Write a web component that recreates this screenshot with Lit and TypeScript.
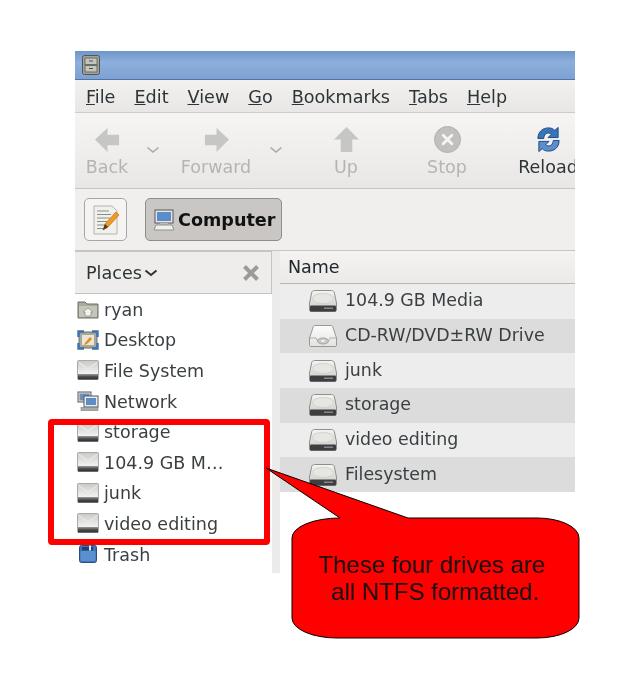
import { LitElement, html, css, svg } from "lit";
import { customElement } from "lit/decorators.js";

const disk = svg`<svg class="side-ic" viewBox="0 0 22 20"><defs><linearGradient id="d1" x1="0" y1="0" x2="0" y2="1"><stop offset="0" stop-color="#c9cac7"/><stop offset=".7" stop-color="#f2f2f0"/><stop offset="1" stop-color="#c8c9c6"/></linearGradient><linearGradient id="d2" x1="0" y1="0" x2="0" y2="1"><stop offset="0" stop-color="#9a9c9a"/><stop offset=".5" stop-color="#4a4c4c"/><stop offset="1" stop-color="#2c2e2e"/></linearGradient></defs><rect x=".5" y=".5" width="21" height="19" rx="1" fill="url(#d1)" stroke="#a9aba7"/><path d="M2 2.500l9 7 9-7" fill="none" stroke="#e8e8e6" stroke-width="1.500"/><rect x="1" y="14" width="20" height="5.500" fill="url(#d2)"/></svg>`;

const bigDisk = svg`<svg class="row-ic" viewBox="0 0 28 24"><defs><linearGradient id="b1" x1="0" y1="0" x2="0" y2="1"><stop offset="0" stop-color="#f4f4f2"/><stop offset="1" stop-color="#c9cac6"/></linearGradient></defs><path d="M5.500 1.500h17c1.500 0 2.300.8 2.800 2L27.500 14v7c0 1-.8 1.500-1.500 1.500H2c-.8 0-1.500-.5-1.500-1.500v-7L2.700 3.500C3.200 2.300 4 1.500 5.500 1.500z" fill="url(#b1)" stroke="#8d8f89"/><ellipse cx="14" cy="9.500" rx="10.500" ry="5" fill="#e6e6e3" stroke="#d2d3cf"/><rect x="1" y="16.500" width="26" height="6" rx="1" fill="#3c3e40"/><rect x="15" y="18.500" width="9" height="1.500" fill="#85878a"/></svg>`;

const cd = svg`<svg class="row-ic" viewBox="0 0 28 24"><defs><linearGradient id="c1" x1="0" y1="0" x2="0" y2="1"><stop offset="0" stop-color="#fdfdfc"/><stop offset="1" stop-color="#e2e2df"/></linearGradient></defs><path d="M6 1.500h16c1 0 1.500.6 1.800 1.500L27.500 14v7c0 1-.7 1.500-1.500 1.500H2c-.8 0-1.500-.5-1.500-1.500v-7L4.200 3C4.500 2.100 5 1.500 6 1.500z" fill="url(#c1)" stroke="#979992"/><path d="M1 14h6c1 3.500 3.500 5 7 5s6-1.500 7-5h6" fill="none" stroke="#b0b2ad"/><ellipse cx="14" cy="17" rx="5.500" ry="3" fill="#c9cac6" stroke="#a2a49f"/><ellipse cx="14" cy="17" rx="1.800" ry="1" fill="#f5f5f3"/></svg>`;

const home = svg`<svg class="side-ic" viewBox="0 0 22 20"><path d="M1 3h7l2 2h11v14H1z" fill="#a8ab9e" stroke="#6b6d62"/><rect x="2" y="7" width="18" height="11" fill="#c4c6bb"/><path d="M11 9l5 4h-2v4H8v-4H6z" fill="#f3f3ef" stroke="#888a7e" stroke-width=".7"/></svg>`;

const desktop = svg`<svg class="side-ic" viewBox="0 0 22 20"><rect x="2" y="2" width="18" height="16" rx="2" fill="#a6a99a" stroke="#6c6f63"/><rect x="5" y="5" width="12" height="10" fill="#e9e6d8"/><path d="M8 13l5-6 2 2-5 5-3 1z" fill="#e8891c"/><g fill="none" stroke="#3f72ae" stroke-width="2.400"><path d="M1.500 7V1.500H7"/><path d="M15 1.500h5.500V7"/><path d="M1.500 13v5.500H7"/><path d="M15 18.500h5.500V13"/></g></svg>`;

const network = svg`<svg class="side-ic" viewBox="0 0 22 20"><rect x="1" y="1" width="13" height="10" fill="#dfe2e6" stroke="#5b5e60"/><rect x="2.500" y="2.500" width="10" height="7" fill="#6e8fb8"/><rect x="7" y="5" width="14" height="11" fill="#eceded" stroke="#54575a"/><rect x="9" y="7" width="10" height="7" fill="#5d8ccb"/><rect x="4" y="16.500" width="17" height="3" fill="#a9aba8" stroke="#7b7d7a" stroke-width=".6"/></svg>`;

const trash = svg`<svg class="side-ic" viewBox="0 0 22 20"><rect x="2.500" y="1.500" width="17" height="17" rx="2" fill="#3d74b8" stroke="#274f86"/><rect x="3.500" y="7" width="15" height="10" rx="1" fill="#5a90d0"/><rect x="5" y="3" width="11" height="3.500" fill="#20416f"/><rect x="12" y="1.500" width="2" height="5" fill="#e8eef6"/></svg>`;

const leftArrow = svg`<svg class="tb-ic" viewBox="0 0 28 28"><path d="M1 14L14 2v7h12v11H14v7z" fill="#c6c6c4"/></svg>`;
const rightArrow = svg`<svg class="tb-ic" viewBox="0 0 28 28"><path d="M27 14L14 2v7H2v11h12v7z" fill="#c6c6c4"/></svg>`;
const upArrow = svg`<svg class="tb-ic" viewBox="0 0 28 28"><path d="M14 1L1 14h7v13h12V14h7z" fill="#c6c6c4"/></svg>`;
const stop = svg`<svg class="tb-ic" viewBox="0 0 28 28"><circle cx="14" cy="14" r="13.500" fill="#c3bfbd" stroke="#b2aeac"/><path d="M9.500 9.500l9 9m0-9l-9 9" stroke="#f6f5f4" stroke-width="3" stroke-linecap="round"/></svg>`;
const reload = svg`<svg class="tb-ic" viewBox="0 0 28 28"><path d="M3 13C3 6 8 1.500 15 2c2.500.2 4 1 5.500 2.500L24 1.500V12H13.500l3.500-3.500C15.500 7.500 14 7 12.500 7.500 10.500 8 9.500 10 9 13z" fill="#3a74b8" stroke="#1f4a87"/><path d="M25 15c0 7-5 11.500-12 11-2.500-.2-4-1-5.500-2.500L4 26.500V16h10.500L11 19.500c1.500 1 3 1.500 4.500 1 2-.5 3-2.500 3.500-5.500z" fill="#5a8fcb" stroke="#1f4a87"/></svg>`;
const chev = svg`<svg class="chev" viewBox="0 0 14 8"><path d="M1.500 1.500L7 6l5.500-4.500" fill="none" stroke="#a9a9a7" stroke-width="1.600"/></svg>`;

const cabinet = svg`<svg class="cab" viewBox="0 0 18 20"><rect x=".5" y=".5" width="17" height="19" rx="2" fill="#a3a39b" stroke="#55554f"/><rect x="3" y="3" width="12" height="6.500" fill="#c5c5bf" stroke="#6c6c66"/><rect x="3" y="10.500" width="12" height="6.500" fill="#c5c5bf" stroke="#6c6c66"/><path d="M7 6h4M7 13.500h4" stroke="#55554f"/></svg>`;

const editIc = svg`<svg class="edit-ic" viewBox="0 0 28 30"><path d="M2 1h18l5 5v23H2z" fill="#f1f1ec" stroke="#b5b5ad"/><path d="M5 6h12M5 9.500h14M5 13h13M5 16.500h10M5 20h8M5 23.500h7" stroke="#8d8d86"/><path d="M11 25l2-6L24 7l3 3-11 12z" fill="#f09a25" stroke="#b96c10" stroke-width=".7"/><path d="M11 25l2-6 3 3z" fill="#3a3a36"/></svg>`;

const compIc = svg`<svg class="comp-ic" viewBox="0 0 22 22"><rect x="2" y="1" width="18" height="13" fill="#e4e6e8" stroke="#54575a"/><rect x="4" y="3" width="14" height="9" fill="#5d8ccb"/><rect x="7" y="14" width="8" height="2" fill="#babcb9"/><path d="M1 21l2-5h16l2 5z" fill="#f0f0ee" stroke="#8f918e"/></svg>`;

const closeX = svg`<svg class="close" viewBox="0 0 18 18"><path d="M2.500 2.500l13 13m0-13l-13 13" stroke="#9b9b98" stroke-width="4"/></svg>`;

const menus = ["File", "Edit", "View", "Go", "Bookmarks", "Tabs", "Help"];
const places = [
  [home, "ryan"], [desktop, "Desktop"], [disk, "File System"], [network, "Network"],
  [disk, "storage"], [disk, "104.9 GB M…"], [disk, "junk"], [disk, "video editing"], [trash, "Trash"],
];
const rows = [
  [bigDisk, "104.9 GB Media"], [cd, "CD-RW/DVD±RW Drive"], [bigDisk, "junk"],
  [bigDisk, "storage"], [bigDisk, "video editing"], [bigDisk, "Filesystem"],
];

@customElement("app-root")
export class AppRoot extends LitElement {
  static styles = css`
    :host { display: block; position: relative; width: 627px; height: 678px; background: #fff; overflow: hidden;
      font-family: "DejaVu Sans", sans-serif; color: #2e3436; }
    .page { padding: 51px 0 0 75px; }
    .win { width: 500px; overflow: hidden; filter: blur(0.4px); }
    .title { height: 29px; display: flex; align-items: center; padding-left: 7px; border-bottom: 1px solid #4d75ad;
      background: linear-gradient(#6e96c8, #8cafdc 40%, #7ea1d2); box-sizing: border-box; }
    .cab { width: 18px; height: 20px; }
    .menu { height: 33px; display: flex; align-items: center; gap: 19px; padding: 1px 0 0 11px; box-sizing: border-box;
      background: linear-gradient(#f2f1f0, #e8e7e6); border-bottom: 1px solid #cfcdcb; font-size: 17.6px; }
    .menu span::first-letter { text-decoration: underline; }
    .toolbar { height: 76px; position: relative; display: flex; box-sizing: border-box; background: linear-gradient(#f6f5f4, #e8e7e6);
      border-bottom: 1px solid #c6c4c2; }
    .tool { display: flex; flex-direction: column; align-items: center; flex: none; padding-top: 13px; font-size: 17.5px; color: #b4b4b2; }
    .tool.on { color: #2e3436; }
    .tb-ic { width: 27px; height: 27px; margin-bottom: 4px; }
    .chevslot { flex: none; display: flex; justify-content: center; padding-top: 33px; }
    .chev { width: 14px; height: 8px; }
    .loc { height: 62px; display: flex; align-items: center; gap: 18px; padding: 0 0 0 9px; box-sizing: border-box;
      background: #f0efee; border-bottom: 1px solid #c6c4c2; }
    .edit { width: 43px; height: 43px; box-sizing: border-box; border: 1px solid #a8a6a3; border-radius: 5px; background: #f5f4f3;
      display: flex; align-items: center; justify-content: center; }
    .edit-ic { width: 28px; height: 30px; }
    .crumb { width: 137px; height: 43px; box-sizing: border-box; border: 1px solid #8f8c89; border-radius: 5px; background: #c9c6c3;
      display: flex; align-items: center; padding-left: 7px; gap: 3px; font-weight: 700; font-size: 17.6px; color: #111; }
    .comp-ic { width: 22px; height: 22px; flex: none; }
    .panes { display: flex; height: 322px; background: #fff; }
    .side { width: 197px; flex: none; }
    .side-head { height: 43px; box-sizing: border-box; display: flex; align-items: center; background: #eeedec;
      border: 1px solid #c6c4c2; border-left: none; padding: 0 10px 0 11px; font-size: 17.6px; }
    .side-head .dn { width: 14px; height: 8px; margin-left: 2px; }
    .close { width: 18px; height: 18px; margin-left: auto; margin-right: 1px; }
    .place { height: 30.6px; display: flex; align-items: center; padding-left: 2px; gap: 5px; font-size: 17.5px; color: #3a3f42; white-space: nowrap; }
    .place span { padding-top: 1px; }
    .side-ic { width: 22px; height: 20px; flex: none; }
    .strip { width: 8px; flex: none; background: #ecebea; }
    .main { width: 295px; flex: none; background: #fff; }
    .col { height: 33px; box-sizing: border-box; background: linear-gradient(#f4f3f2, #ebeae9); border-bottom: 1px solid #b9b7b5;
      display: flex; align-items: center; padding-left: 8px; font-size: 17.5px; color: #20262a; }
    .row { height: 34.65px; display: flex; align-items: center; gap: 8px; padding-left: 29px; font-size: 17.4px; color: #3a3f42; white-space: nowrap; }
    .row span { padding-bottom: 2px; }
    .row:nth-child(odd) { background: #ededed; }
    .row:nth-child(even) { background: #dcdcdc; }
    .row-ic { width: 28px; height: 24px; flex: none; }
    .note { position: absolute; left: 0; top: 0; width: 627px; height: 678px; }
    .label { position: absolute; left: 288px; top: 551px; width: 287px; text-align: center; font-family: "Liberation Sans", sans-serif;
      font-size: 24px; line-height: 27px; color: #1d1111; white-space: pre; }
  `;

  render() {
    return html`
      <div class="page"><div class="win">
        <div class="title">${cabinet}</div>
        <div class="menu">${menus.map((m) => html`<span>${m}</span>`)}</div>
        <div class="toolbar">
          <div class="tool" style="width:64px">${leftArrow}<span>Back</span></div>
          <div class="chevslot" style="width:28px">${chev}</div>
          <div class="tool" style="width:98px">${rightArrow}<span>Forward</span></div>
          <div class="chevslot" style="width:22px">${chev}</div>
          <div class="tool" style="width:118px">${upArrow}<span>Up</span></div>
          <div class="tool" style="width:84px">${stop}<span>Stop</span></div>
          <div class="tool on" style="width:118px">${reload}<span>Reload</span></div>
        </div>
        <div class="loc">
          <div class="edit">${editIc}</div>
          <div class="crumb">${compIc}<span>Computer</span></div>
        </div>
        <div class="panes">
          <div class="side">
            <div class="side-head"><span>Places</span>
              <svg class="dn" viewBox="0 0 14 8"><path d="M1.500 1.500L7 6l5.500-4.500" fill="none" stroke="#2e3436" stroke-width="2"/></svg>
              ${closeX}</div>
            <div>${places.map(([i, t]) => html`<div class="place">${i}<span>${t}</span></div>`)}</div>
          </div>
          <div class="strip"></div>
          <div class="main">
            <div class="col">Name</div>
            <div>${rows.map(([i, t]) => html`<div class="row">${i}<span>${t}</span></div>`)}</div>
          </div>
        </div>
      </div></div>
      <svg class="note" viewBox="0 0 627 678">
        <rect x="51" y="422" width="216" height="120" rx="1" fill="none" stroke="#f00" stroke-width="6"/>
        <path d="M266 468L408 518H537A42 20 0 0 1 579 538V618A42 20 0 0 1 537 638H337A45 20 0 0 1 292 618V538A48 20 0 0 1 340 518Z" fill="#f00" stroke="#000" stroke-width="1"/>
      </svg>
      <div class="label">These four drives are
 all NTFS formatted.</div>
    `;
  }
}
